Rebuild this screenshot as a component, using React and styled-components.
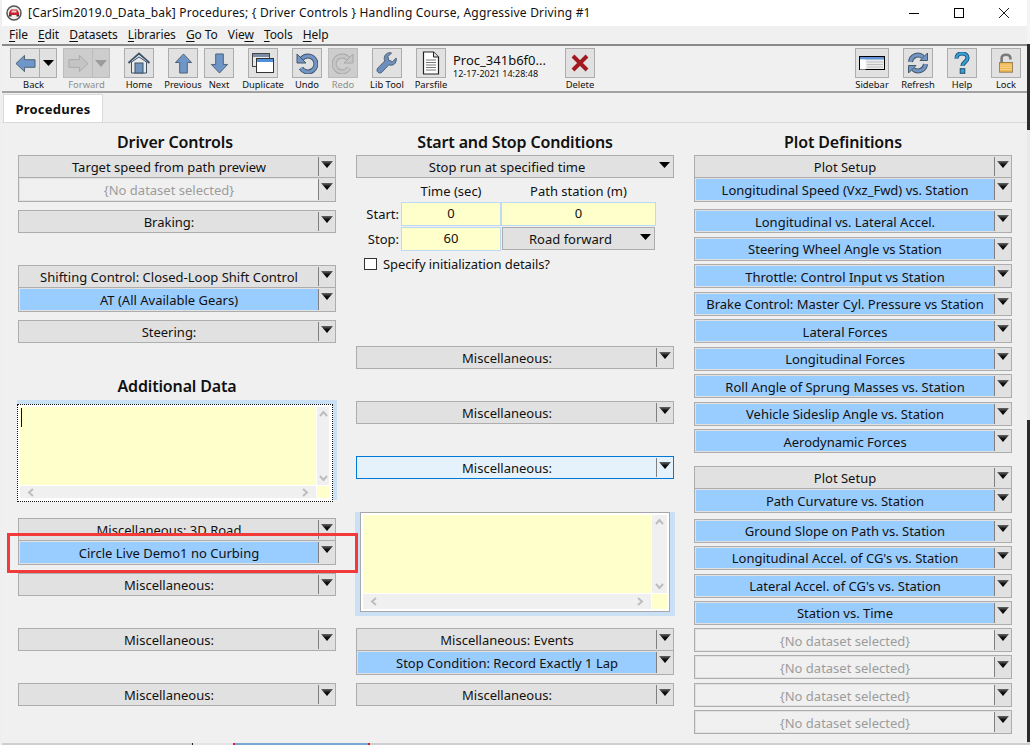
import React from "react";
import styled, { createGlobalStyle } from "styled-components";

const Global = createGlobalStyle`
  html, body { margin: 0; padding: 0; background: #e4e4e4; overflow: hidden; }
  * { box-sizing: border-box; }
  body { font-family: "Noto Sans", "Open Sans", sans-serif; color: #111; }
`;

const Page = styled.div`
  position: relative;
  width: 1030px;
  height: 745px;
  display: flex;
  overflow: hidden;
`;
const LeftEdge = styled.div`
  width: 2px;
  background: #efefef;
`;
const RightEdge = styled.div`
  width: 3px;
  background: linear-gradient(#f4f4f4 0 44px, #2c2c2c 44px 130px, #e9e9e9 130px 420px, #2c2c2c 420px 742px, #d0d0d0 742px);
`;
const Stage = styled.div`
  width: 1025px;
  display: flex;
  flex-direction: column;
`;
const Window = styled.div`
  height: 743px;
  background: #f0f0f0;
  display: flex;
  flex-direction: column;
`;
const Behind = styled.div`
  height: 2px;
  display: flex;
  background: #cfcfcf;
`;
const BehindPiece = styled.div`
  width: ${(p) => p.$w}px;
  background: ${(p) => p.$c};
`;

const TitleBar = styled.div`
  height: 26px;
  background: #fff;
  display: flex;
  align-items: center;
  padding: 0 18px 0 4px;
  font-size: 12px;
`;
const TitleText = styled.div`
  margin: -2px 0 0 6px;
  flex: 1;
  white-space: nowrap;
  letter-spacing: 0.2px;
`;
const Controls = styled.div`
  display: flex;
  gap: 35px;
  align-items: center;
`;

const MenuBar = styled.div`
  height: 18px;
  display: flex;
  align-items: center;
  padding: 0 0 2px 7px;
  font-size: 12px;
  letter-spacing: -0.1px;
  gap: 10.2px;
`;
const MenuItem = styled.span`
  white-space: nowrap;
  u { text-underline-offset: 2px; }
`;

const Toolbar = styled.div`
  height: 49px;
  border-top: 2px solid #8a8a8a;
  border-bottom: 2px solid #a2a2a2;
  display: flex;
  padding: 2px 6px 0 8px;
`;
const Tool = styled.div`
  margin-left: ${(p) => p.$gap || 0}px;
  width: ${(p) => p.$w || 30}px;
  display: flex;
  flex-direction: column;
  align-items: center;
  flex: none;
`;
const ToolBox = styled.div`
  width: 100%;
  height: 30px;
  border: 1px solid ${(p) => (p.$off ? "#bcbcbc" : "#adadad")};
  background: ${(p) => (p.$off ? "#cdcdcd" : "#e1e1e1")};
  display: flex;
  align-items: center;
  justify-content: center;
`;
const SplitArrow = styled.div`
  width: 17px;
  height: 100%;
  flex: none;
  border-left: 1px solid ${(p) => (p.$off ? "#bcbcbc" : "#adadad")};
  display: flex;
  align-items: center;
  justify-content: center;
`;
const SplitMain = styled.div`
  flex: 1;
  display: flex;
  justify-content: center;
`;
const ToolLabel = styled.div`
  font-size: 9.4px;
  line-height: 12px;
  margin-top: 1px;
  white-space: nowrap;
  color: ${(p) => (p.$off ? "#8e8e8e" : "#111")};
`;
const ProcInfo = styled.div`
  margin-left: 7px;
  width: 112px;
  flex: none;
  padding-top: 5px;
`;
const ProcName = styled.div`
  font-size: 13px;
  line-height: 15px;
  white-space: nowrap;
`;
const ProcDate = styled.div`
  font-size: 9px;
  line-height: 11px;
  white-space: nowrap;
`;
const Spacer = styled.div`
  flex: 1;
`;

const TabStrip = styled.div`
  height: 30px;
  display: flex;
  align-items: flex-end;
  padding-left: 1px;
  border-bottom: 1px solid #d9d9d9;
`;
const Tab = styled.div`
  width: 100px;
  height: 28px;
  background: #fff;
  border: 1px solid #d9d9d9;
  border-bottom: none;
  font-size: 13px;
  font-weight: 700;
  letter-spacing: 0.25px;
  text-align: center;
  line-height: 29px;
`;

const Panel = styled.div`
  flex: 1;
  display: grid;
  grid-template-columns: repeat(3, 318px);
  column-gap: 20px;
  padding: 8px 0 0 16px;
`;
const Column = styled.div`
  display: flex;
  flex-direction: column;
`;
const Heading = styled.div`
  height: 24px;
  line-height: 22px;
  margin-top: ${(p) => p.$gap || 0}px;
  padding-right: ${(p) => p.$shift || 0}px;
  font-size: 16px;
  font-weight: 600;
  letter-spacing: -0.15px;
  text-align: center;
`;

const ComboBox = styled.div`
  margin-top: ${(p) => p.$gap || 0}px;
  height: ${(p) => p.$h || 23}px;
  flex: none;
  display: flex;
  border: 1px solid ${(p) => (p.$tone === "focus" ? "#0078d7" : "#adadad")};
  background: ${(p) => (p.$tone === "focus" ? "#e5f1fb" : "#e1e1e1")};
  padding: 1px 0 1px 1px;
  position: relative;
  z-index: ${(p) => (p.$gap < 0 ? 1 : 0)};
`;
const ComboField = styled.div`
  flex: 1;
  min-width: 0;
  display: flex;
  align-items: center;
  justify-content: center;
  font-size: 13px;
  white-space: nowrap;
  padding-top: ${(p) => p.$nudge || 0}px;
  background: ${(p) =>
    p.$tone === "blue" ? "#99ccff" : p.$tone === "blank" ? "#f0f0f0" : "transparent"};
  color: ${(p) => (p.$tone === "blank" ? "#9c9c9c" : "#111")};
`;
const ComboButton = styled.div`
  width: 17px;
  flex: none;
  border-left: ${(p) => (p.$plain ? "none" : "1px solid #808080")};
  display: flex;
  justify-content: center;
  padding-top: ${(p) => (p.$plain ? 5 : 4)}px;
`;

const FieldGrid = styled.div`
  display: grid;
  grid-template-columns: 45px 100px 155px;
  grid-template-rows: 20px 24px 24px;
  row-gap: 1px;
  margin-top: 3px;
  font-size: 13px;
`;
const ColLabel = styled.div`
  text-align: center;
  line-height: 20px;
`;
const RowLabel = styled.div`
  text-align: right;
  line-height: 24px;
  padding-right: 2px;
`;
const NumField = styled.div`
  background: #ffffcc;
  border: 1px solid #bcd9f5;
  text-align: center;
  line-height: 21px;
`;
const InlineCombo = styled(ComboBox)`
  margin: 0 1px;
  height: 23px;
`;
const CheckRow = styled.div`
  margin-top: 5px;
  height: 16px;
  display: flex;
  align-items: center;
  padding-left: 8px;
  font-size: 13px;
  letter-spacing: -0.1px;
`;
const CheckBox = styled.div`
  width: 13px;
  height: 12px;
  background: #fff;
  border: 1px solid #333;
  margin: -1px 6px 0 0;
`;

const MemoFrame = styled.div`
  margin: ${(p) => p.$gap}px -1px 0;
  height: ${(p) => p.$h}px;
  flex: none;
  background: #c9e0f5;
  display: flex;
  padding: ${(p) => p.$pad};
`;
const Memo = styled.div`
  flex: 1;
  background: #fff;
  border: 1px ${(p) => (p.$dotted ? "dotted #111" : "solid #a8a8a8")};
  padding: ${(p) => (p.$dotted ? "2px 3px 3px 2px" : "2px")};
  margin-bottom: ${(p) => (p.$dotted ? -2 : 0)}px;
  display: grid;
  grid-template-columns: 1fr ${(p) => p.$bar}px;
  grid-template-rows: 1fr ${(p) => p.$bar}px;
  gap: 1px;
`;
const MemoText = styled.div`
  background: #ffffcc;
  padding: 1px 0 0 1px;
`;
const Caret = styled.div`
  width: 1px;
  height: 19px;
  background: #111;
`;
const ScrollV = styled.div`
  background: #f0f0f0;
  display: flex;
  flex-direction: column;
  justify-content: space-between;
  align-items: center;
  padding: 3px 0;
`;
const ScrollH = styled.div`
  background: #f0f0f0;
  display: flex;
  justify-content: space-between;
  align-items: center;
  padding: 0 6px;
`;
const ScrollCorner = styled.div`
  background: #ffffcc;
`;
const Annotation = styled.div`
  position: absolute;
  left: 7px;
  top: 533px;
  width: 351px;
  height: 40px;
  border: 3px solid #f33a3a;
  pointer-events: none;
  z-index: 3;
`;

const Drop = ({ off }) => (
  <svg width="12" height="7" viewBox="0 0 12 7">
    <defs>
      <linearGradient id="dropfade" x1="0" y1="0" x2="0" y2="1">
        <stop offset="0" stopColor="#666" />
        <stop offset="0.5" stopColor="#111" />
        <stop offset="1" stopColor="#000" />
      </linearGradient>
    </defs>
    <polygon points="0,0 12,0 6,7" fill={off ? "#9c9c9c" : "url(#dropfade)"} />
  </svg>
);
const FlatDrop = () => (
  <svg width="11" height="6" viewBox="0 0 11 6">
    <polygon points="0,0 11,0 5.5,6" fill="#000" />
  </svg>
);
const Chev = ({ r = 0 }) => (
  <svg width="9" height="7" viewBox="0 0 9 7" style={{ transform: `rotate(${r}deg)` }}>
    <polyline points="1,6 4.5,2 8,6" fill="none" stroke="#bdbdbd" strokeWidth="2" />
  </svg>
);

const Arrow = ({ r = 0, off }) => (
  <svg width="21" height="21" viewBox="0 0 22 22" style={{ transform: `rotate(${r}deg)` }}>
    <polygon
      points="1,11 10,2.5 10,7 21,7 21,15 10,15 10,19.5"
      fill={off ? "#c4c4c4" : "#6f96c8"}
      stroke={off ? "#aaaaaa" : "#4c5f72"}
      strokeWidth="1"
    />
  </svg>
);
const HomeIcon = () => (
  <svg width="24" height="24" viewBox="0 0 24 24">
    <polyline points="1.5,12 12,2.5 22.5,12" fill="none" stroke="#3d5266" strokeWidth="2" />
    <polyline points="5,10.5 12,5 19,10.5" fill="none" stroke="#cfe0f0" strokeWidth="1.4" />
    <polygon points="4.5,11 12,6 19.5,11 19.5,22 4.5,22" fill="#e9e9e9" stroke="#3d5266" strokeWidth="1" />
    <rect x="8" y="12" width="8" height="10" fill="#7094bd" stroke="#3d5266" />
  </svg>
);
const DuplicateIcon = () => (
  <svg width="22" height="20" viewBox="0 0 22 20">
    <rect x="0.5" y="0.5" width="17" height="13" fill="#e8e8e8" stroke="#444" />
    <rect x="1" y="1" width="16" height="3" fill="#7b8da6" />
    <rect x="4.5" y="5.5" width="17" height="14" fill="#fff" stroke="#333" />
    <rect x="5" y="6" width="16" height="3" fill="#4f8fdc" />
  </svg>
);
const UndoIcon = ({ flip, off }) => (
  <svg width="22" height="22" viewBox="0 0 22 22" style={{ transform: flip ? "scaleX(-1)" : "none" }}>
    <path
      d="M6 6.5 A 8 8 0 1 1 5 16"
      fill="none"
      stroke={off ? "#a8a8a8" : "#46586c"}
      strokeWidth="5"
    />
    <path
      d="M6 6.5 A 8 8 0 1 1 5 16"
      fill="none"
      stroke={off ? "#c6c6c6" : "#7196c6"}
      strokeWidth="3"
    />
    <polygon
      points="1,2 1,11 10,11"
      fill={off ? "#c6c6c6" : "#7196c6"}
      stroke={off ? "#a8a8a8" : "#46586c"}
    />
  </svg>
);
const WrenchIcon = () => (
  <svg width="22" height="22" viewBox="0 0 24 24">
    <path
      d="M22 6.5l-4 4-4-1.5-1-4 4-4c-4-1-8 1.500-8 6 0 1 .2 2 .5 2.800L2 17.500c-1.500 1.500-1 3.500 0 4.500s3 1.500 4.500 0l7.500-8c4 1.500 9-1 8-7.500z"
      fill="#6c8fbb"
      stroke="#4a5c70"
      strokeWidth="1"
    />
  </svg>
);
const DocIcon = () => (
  <svg width="20" height="24" viewBox="0 0 20 24">
    <path d="M2.500 1h10l5 5v17h-15z" fill="#fff" stroke="#222" strokeWidth="1.200" />
    <path d="M12.500 1v5h5" fill="#ddd" stroke="#222" />
    <path d="M5 9h10M5 11.500h10M5 14h10M5 16.500h10M5 19h10" stroke="#777" />
  </svg>
);
const DeleteIcon = () => (
  <svg width="20" height="20" viewBox="0 0 20 20">
    <path d="M3 3L17 17M17 3L3 17" stroke="#a01a1f" strokeWidth="4" />
  </svg>
);
const SidebarIcon = () => (
  <svg width="26" height="14" viewBox="0 0 26 14">
    <rect x="0.500" y="0.500" width="25" height="13" fill="#ececec" stroke="#000" />
    <rect x="1" y="1" width="24" height="2.500" fill="#5f94d6" />
    <rect x="1" y="3.500" width="5.500" height="10" fill="#fff" />
    <path d="M8 6h16M8 8.500h16M8 11h16" stroke="#bdbdbd" />
  </svg>
);
const RefreshIcon = () => (
  <svg width="20" height="22" viewBox="0 0 20 22">
    <path d="M2.500 10 A 7.500 7.500 0 0 1 15 5" fill="none" stroke="#46586c" strokeWidth="5" />
    <path d="M2.500 10 A 7.500 7.500 0 0 1 15 5" fill="none" stroke="#7196c6" strokeWidth="3" />
    <polygon points="12,8.500 19.500,8.500 19.500,1" fill="#7196c6" stroke="#46586c" />
    <path d="M17.500 12 A 7.500 7.500 0 0 1 5 17" fill="none" stroke="#46586c" strokeWidth="5" />
    <path d="M17.500 12 A 7.500 7.500 0 0 1 5 17" fill="none" stroke="#7196c6" strokeWidth="3" />
    <polygon points="8,13.500 .5,13.500 .5,21" fill="#7196c6" stroke="#46586c" />
  </svg>
);
const HelpIcon = () => (
  <svg width="16" height="22" viewBox="0 0 16 22">
    <path d="M2.500 6.500C2.500 3 5 1.500 8 1.500s5.500 1.700 5.500 4.500c0 4-5 4-5 8" fill="none" stroke="#1c4e6e" strokeWidth="4.200" />
    <path d="M2.500 6.500C2.500 3 5 1.500 8 1.500s5.500 1.700 5.500 4.500c0 4-5 4-5 8" fill="none" stroke="#35a0d8" strokeWidth="2.400" />
    <rect x="6.200" y="16.700" width="4.600" height="4.600" fill="#35a0d8" stroke="#1c4e6e" />
  </svg>
);
const LockIcon = () => (
  <svg width="14" height="20" viewBox="0 0 16 22">
    <path d="M3 11V5.500C3 3 5 1.500 8 1.500S13 3 13 5.500V7" fill="none" stroke="#7a7a7a" strokeWidth="3" />
    <rect x="0.500" y="10.500" width="15" height="11" fill="#f0b650" stroke="#8a7a50" />
    <path d="M1 13.500h14M1 16h14M1 18.500h14" stroke="#f9dc9a" />
  </svg>
);
const CarLogo = () => (
  <svg width="16" height="16" viewBox="0 0 16 16">
    <circle cx="8" cy="8" r="7" fill="#f3eeee" stroke="#555" strokeWidth="1.500" />
    <path d="M3 10V7.500L5 4.500h6l2 3V10z" fill="#c4232f" />
    <rect x="5.500" y="5.500" width="5" height="2" fill="#f4d0d0" />
    <rect x="3" y="10" width="2.500" height="1.500" fill="#333" />
    <rect x="10.500" y="10" width="2.500" height="1.500" fill="#333" />
  </svg>
);
const MinIcon = () => (
  <svg width="10" height="10" viewBox="0 0 10 10">
    <path d="M0 5.500h10" stroke="#000" />
  </svg>
);
const MaxIcon = () => (
  <svg width="10" height="10" viewBox="0 0 10 10">
    <rect x="0.500" y="0.500" width="9" height="9" fill="none" stroke="#000" />
  </svg>
);
const CloseIcon = () => (
  <svg width="10" height="10" viewBox="0 0 10 10">
    <path d="M0 0L10 10M10 0L0 10" stroke="#000" strokeWidth="0.9" />
  </svg>
);

const Combo = ({ text, tone = "plain", gap = 0, h = 23, nudge = 0 }) => (
  <ComboBox $gap={gap} $h={h} $tone={tone}>
    <ComboField $tone={tone} $nudge={nudge}>
      {text}
    </ComboField>
    <ComboButton>
      <Drop />
    </ComboButton>
  </ComboBox>
);
const WideCombo = ({ text, gap = 0 }) => (
  <ComboBox $gap={gap}>
    <ComboField>{text}</ComboField>
    <ComboButton $plain>
      <FlatDrop />
    </ComboButton>
  </ComboBox>
);

const menu = [
  ["F", "ile"],
  ["E", "dit"],
  ["D", "atasets"],
  ["L", "ibraries"],
  ["G", "o To"],
  ["Vie", "", "w"],
  ["T", "ools"],
  ["H", "elp"],
];

const NONE = "{No dataset selected}";
const leftTop = [
  { text: "Target speed from path preview" },
  { text: NONE, tone: "blank", gap: -1, h: 25 },
  { text: "Braking:", gap: 8 },
  { text: "Shifting Control: Closed-Loop Shift Control", gap: 32 },
  { text: "AT (All Available Gears)", tone: "blue", gap: -1, h: 25 },
  { text: "Steering:", gap: 8 },
];
const leftBottom = [
  { text: "Miscellaneous: 3D Road", gap: 18 },
  { text: "Circle Live Demo1 no Curbing", tone: "blue", gap: -1, h: 25 },
  { text: "Miscellaneous:", gap: 8 },
  { text: "Miscellaneous:", gap: 32 },
  { text: "Miscellaneous:", gap: 32 },
];
const midA = [
  { text: "Miscellaneous:", gap: 74 },
  { text: "Miscellaneous:", gap: 32 },
  { text: "Miscellaneous:", gap: 32, tone: "focus" },
];
const midB = [
  { text: "Miscellaneous: Events", gap: 12 },
  { text: "Stop Condition: Record Exactly 1 Lap", tone: "blue", gap: -1, h: 25 },
  { text: "Miscellaneous:", gap: 8 },
];
const B = "blue";
const right = [
  { text: "Plot Setup" },
  { text: "Longitudinal Speed (Vxz_Fwd) vs. Station", tone: B, gap: -1, h: 25 },
  { text: "Longitudinal vs. Lateral Accel.", tone: B, gap: 7, h: 24, nudge: 2 },
  { text: "Steering Wheel Angle vs Station", tone: B, gap: 4, h: 24 },
  { text: "Throttle: Control Input vs Station", tone: B, gap: 3, h: 24, nudge: 2 },
  { text: "Brake Control: Master Cyl. Pressure vs Station", tone: B, gap: 4, h: 24 },
  { text: "Lateral Forces", tone: B, gap: 3, h: 24, nudge: 2 },
  { text: "Longitudinal Forces", tone: B, gap: 4, h: 24 },
  { text: "Roll Angle of Sprung Masses vs. Station", tone: B, gap: 3, h: 24, nudge: 2 },
  { text: "Vehicle Sideslip Angle vs. Station", tone: B, gap: 4, h: 24 },
  { text: "Aerodynamic Forces", tone: B, gap: 3, h: 24, nudge: 2 },
  { text: "Plot Setup", gap: 13 },
  { text: "Path Curvature vs. Station", tone: B, gap: -1, h: 25 },
  { text: "Ground Slope on Path vs. Station", tone: B, gap: 6, h: 24 },
  { text: "Longitudinal Accel. of CG's vs. Station", tone: B, gap: 3, h: 24 },
  { text: "Lateral Accel. of CG's vs. Station", tone: B, gap: 4, h: 24 },
  { text: "Station vs. Time", tone: B, gap: 3, h: 24 },
  { text: NONE, tone: "blank", gap: 3, h: 24, nudge: 2 },
  { text: NONE, tone: "blank", gap: 3, h: 24, nudge: 2 },
  { text: NONE, tone: "blank", gap: 4, h: 24, nudge: 2 },
  { text: NONE, tone: "blank", gap: 3, h: 24, nudge: 2 },
];

const MemoBody = ({ caret }) => (
  <>
    <MemoText>{caret && <Caret />}</MemoText>
    <ScrollV>
      <Chev />
      <Chev r={180} />
    </ScrollV>
    <ScrollH>
      <Chev r={-90} />
      <Chev r={90} />
    </ScrollH>
    <ScrollCorner />
  </>
);

export default function App() {
  return (
    <Page>
      <Global />
      <LeftEdge />
      <Stage>
        <Window>
          <TitleBar>
            <CarLogo />
            <TitleText>
              [CarSim2019.0_Data_bak] Procedures; {"{"} Driver Controls {"}"} Handling Course, Aggressive Driving #1
            </TitleText>
            <Controls>
              <MinIcon />
              <MaxIcon />
              <CloseIcon />
            </Controls>
          </TitleBar>
          <MenuBar>
            {menu.map(([a, b, c]) => (
              <MenuItem key={a}>
                {c ? (
                  <>
                    {a}
                    <u>{c}</u>
                  </>
                ) : (
                  <>
                    <u>{a}</u>
                    {b}
                  </>
                )}
              </MenuItem>
            ))}
          </MenuBar>
          <Toolbar>
            <Tool $w={47}>
              <ToolBox>
                <SplitMain>
                  <Arrow />
                </SplitMain>
                <SplitArrow>
                  <FlatDrop />
                </SplitArrow>
              </ToolBox>
              <ToolLabel>Back</ToolLabel>
            </Tool>
            <Tool $w={47} $gap={6}>
              <ToolBox $off>
                <SplitMain>
                  <Arrow r={180} off />
                </SplitMain>
                <SplitArrow $off>
                  <Drop off />
                </SplitArrow>
              </ToolBox>
              <ToolLabel $off>Forward</ToolLabel>
            </Tool>
            <Tool $gap={14}>
              <ToolBox>
                <HomeIcon />
              </ToolBox>
              <ToolLabel>Home</ToolLabel>
            </Tool>
            <Tool $gap={14}>
              <ToolBox>
                <Arrow r={90} />
              </ToolBox>
              <ToolLabel>Previous</ToolLabel>
            </Tool>
            <Tool $gap={6}>
              <ToolBox>
                <Arrow r={-90} />
              </ToolBox>
              <ToolLabel>Next</ToolLabel>
            </Tool>
            <Tool $gap={14}>
              <ToolBox>
                <DuplicateIcon />
              </ToolBox>
              <ToolLabel>Duplicate</ToolLabel>
            </Tool>
            <Tool $gap={14}>
              <ToolBox>
                <UndoIcon />
              </ToolBox>
              <ToolLabel>Undo</ToolLabel>
            </Tool>
            <Tool $gap={6}>
              <ToolBox $off>
                <UndoIcon flip off />
              </ToolBox>
              <ToolLabel $off>Redo</ToolLabel>
            </Tool>
            <Tool $gap={14}>
              <ToolBox>
                <WrenchIcon />
              </ToolBox>
              <ToolLabel>Lib Tool</ToolLabel>
            </Tool>
            <Tool $gap={14}>
              <ToolBox>
                <DocIcon />
              </ToolBox>
              <ToolLabel>Parsfile</ToolLabel>
            </Tool>
            <ProcInfo>
              <ProcName>Proc_341b6f0...</ProcName>
              <ProcDate>12-17-2021 14:28:48</ProcDate>
            </ProcInfo>
            <Tool>
              <ToolBox>
                <DeleteIcon />
              </ToolBox>
              <ToolLabel>Delete</ToolLabel>
            </Tool>
            <Spacer />
            <Tool $w={34}>
              <ToolBox>
                <SidebarIcon />
              </ToolBox>
              <ToolLabel>Sidebar</ToolLabel>
            </Tool>
            <Tool $gap={14}>
              <ToolBox>
                <RefreshIcon />
              </ToolBox>
              <ToolLabel>Refresh</ToolLabel>
            </Tool>
            <Tool $gap={14}>
              <ToolBox>
                <HelpIcon />
              </ToolBox>
              <ToolLabel>Help</ToolLabel>
            </Tool>
            <Tool $gap={14}>
              <ToolBox>
                <LockIcon />
              </ToolBox>
              <ToolLabel>Lock</ToolLabel>
            </Tool>
          </Toolbar>
          <TabStrip>
            <Tab>Procedures</Tab>
          </TabStrip>
          <Panel>
            <Column>
              <Heading $shift={4}>Driver Controls</Heading>
              {leftTop.map((c, i) => (
                <Combo key={i} {...c} />
              ))}
              <Heading $gap={32}>Additional Data</Heading>
              <MemoFrame $gap={1} $h={100} $pad="4px 4px 0 0">
                <Memo $dotted $bar={12}>
                  <MemoBody caret />
                </Memo>
              </MemoFrame>
              {leftBottom.map((c, i) => (
                <Combo key={i} {...c} />
              ))}
            </Column>
            <Column>
              <Heading>Start and Stop Conditions</Heading>
              <WideCombo text="Stop run at specified time" />
              <FieldGrid>
                <div />
                <ColLabel>Time (sec)</ColLabel>
                <ColLabel>Path station (m)</ColLabel>
                <RowLabel>Start:</RowLabel>
                <NumField>0</NumField>
                <NumField>0</NumField>
                <RowLabel>Stop:</RowLabel>
                <NumField>60</NumField>
                <InlineCombo as="div">
                  <ComboField>Road forward</ComboField>
                  <ComboButton $plain>
                    <FlatDrop />
                  </ComboButton>
                </InlineCombo>
              </FieldGrid>
              <CheckRow>
                <CheckBox />
                Specify initialization details?
              </CheckRow>
              {midA.map((c, i) => (
                <Combo key={i} {...c} />
              ))}
              <MemoFrame $gap={33} $h={104} $pad="0 5px 4px 5px">
                <Memo $bar={15}>
                  <MemoBody />
                </Memo>
              </MemoFrame>
              {midB.map((c, i) => (
                <Combo key={i} {...c} />
              ))}
            </Column>
            <Column>
              <Heading $shift={20}>Plot Definitions</Heading>
              {right.map((c, i) => (
                <Combo key={i} {...c} />
              ))}
            </Column>
          </Panel>
        </Window>
        <Behind>
          <BehindPiece $w={190} $c="#cfcfcf" />
          <BehindPiece $w={1} $c="#222" />
          <BehindPiece $w={40} $c="#e4e4e4" />
          <BehindPiece $w={2} $c="#d8232a" />
          <BehindPiece $w={133} $c="#7ba7d6" />
          <BehindPiece $w={2} $c="#d8232a" />
        </Behind>
      </Stage>
      <RightEdge />
      <Annotation />
    </Page>
  );
}
